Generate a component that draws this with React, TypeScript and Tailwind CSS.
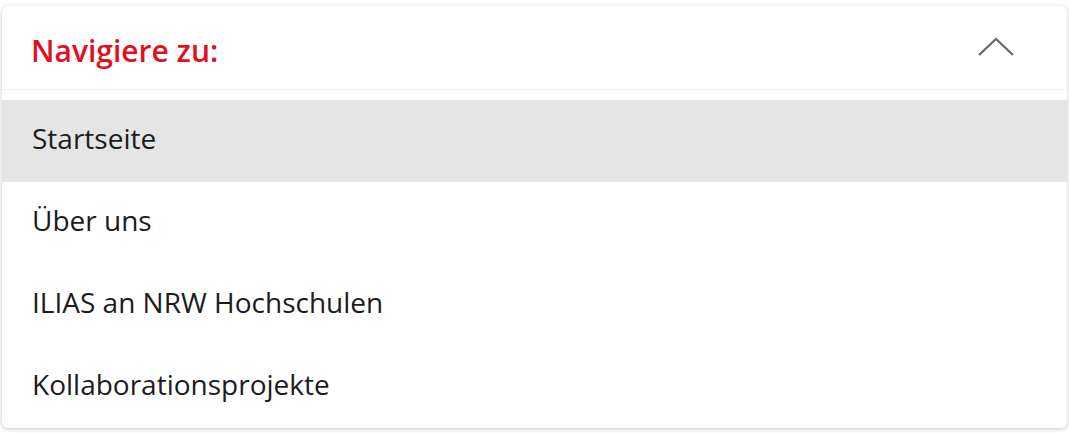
const items = ['Startseite', 'Über uns', 'ILIAS an NRW Hochschulen', 'Kollaborationsprojekte']

export default function App() {
  return (
    <div className="min-h-screen bg-white px-[2px] pt-[6px] font-['Open_Sans',sans-serif]">
      <div className="rounded-[6px] bg-white shadow-[0_1px_4px_rgba(0,0,0,0.22)] overflow-hidden">
        {/* Header */}
        <div className="flex h-[84px] items-center justify-between border-b border-[#f2f2f2] pl-[29px] pr-[52px]">
          <span className="mt-[5px] text-[30px] font-semibold text-[#e2101e]">Navigiere zu:</span>
          <svg width="37" height="20" viewBox="0 0 37 20" fill="none" className="mt-[-2px]">
            <path d="M1 18 L18 2 L35 18" stroke="#666666" strokeWidth="2.2" />
          </svg>
        </div>
        {/* Items */}
        <ul className="pt-[10px]">
          {items.map((item, i) => (
            <li
              key={item}
              className={`flex h-[82px] items-center pb-[6px] pl-[30px] text-[28px] text-[#1c1c1c] ${i === 0 ? 'bg-[#e5e5e5]' : ''}`}
            >
              {item}
            </li>
          ))}
        </ul>
      </div>
    </div>
  )
}
